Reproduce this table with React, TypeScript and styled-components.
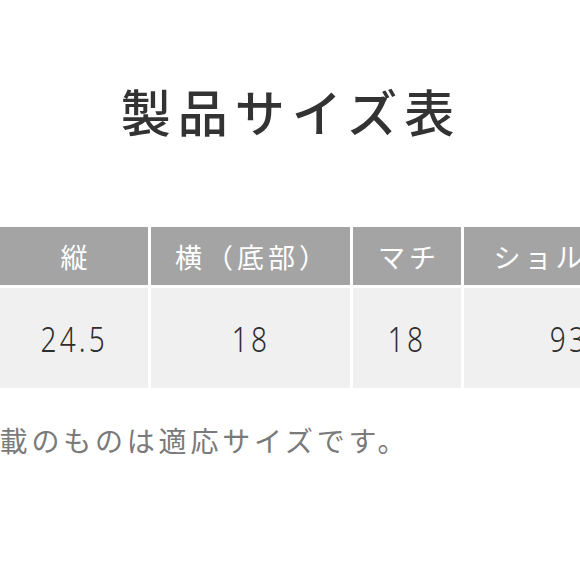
import styled, { createGlobalStyle } from "styled-components"

const GlobalStyle = createGlobalStyle`
  html,
  body {
    margin: 0;
    padding: 0;
    background: #ffffff;
    overflow: hidden;
  }

  body {
    font-family: "Noto Sans CJK JP", "Noto Sans", sans-serif;
  }
`

type SizeColumn = {
  label: string
  value: string
}

const columns: SizeColumn[] = [
  { label: "縦", value: "24.5" },
  { label: "横（底部）", value: "18" },
  { label: "マチ", value: "18" },
  { label: "ショルダー", value: "93" },
]

export default function App() {
  return (
    <>
      <GlobalStyle />
      <Page>
        <Title>製品サイズ表</Title>
        <Table>
          {columns.map((col) => (
            <HeadCell key={col.label}>{col.label}</HeadCell>
          ))}
          {columns.map((col) => (
            <ValueCell key={col.label}>
              <Digits>{col.value}</Digits>
            </ValueCell>
          ))}
        </Table>
        <Note>※記載のものは適応サイズです。</Note>
      </Page>
    </>
  )
}

const Page = styled.div`
  width: 580px;
  height: 580px;
  display: flex;
  flex-direction: column;
`

const Title = styled.h1`
  margin: 74px 0 0;
  text-align: center;
  font-size: 50px;
  font-weight: 500;
  line-height: 72px;
  letter-spacing: 7px;
  padding-left: 2px;
  color: #333333;
`

const Table = styled.div`
  margin-top: 81px;
  display: grid;
  grid-template-columns: 148px 199px 108px 210px;
  grid-template-rows: 58px 100px;
  gap: 3px;
  width: max-content;
`

const HeadCell = styled.div`
  display: flex;
  align-items: center;
  justify-content: center;
  background: #a4a4a4;
  color: #ffffff;
  font-size: 27px;
  letter-spacing: 4px;
  padding-left: 4px;
`

const ValueCell = styled.div`
  display: flex;
  align-items: center;
  justify-content: center;
  background: #f0f0f0;
  color: #2e2e2e;
`

const Digits = styled.span`
  display: inline-block;
  font-family: "Noto Sans", "DejaVu Sans", sans-serif;
  font-weight: 300;
  font-size: 35px;
  letter-spacing: 4px;
  transform: scaleX(0.8);
`

const Note = styled.p`
  margin: 32px 0 0 -64px;
  font-size: 28px;
  line-height: 40px;
  letter-spacing: 3.8px;
  color: #7a7a7a;
  white-space: nowrap;
`
